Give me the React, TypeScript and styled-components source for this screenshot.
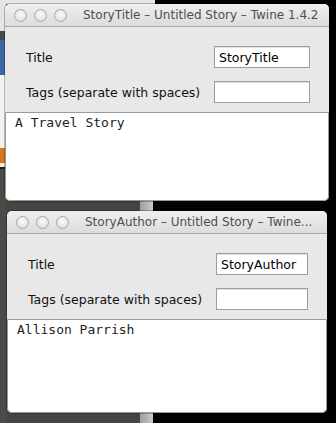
import React from 'react'
import styled, { createGlobalStyle } from 'styled-components'

const GlobalStyle = createGlobalStyle`
  html, body {
    margin: 0;
    padding: 0;
    background: #000;
  }
`

const uiFont = `"DejaVu Sans", "Liberation Sans", sans-serif`
const monoFont = `"DejaVu Sans Mono", "Liberation Mono", monospace`

const Desktop = styled.div`
  width: 336px;
  height: 423px;
  overflow: hidden;
  box-sizing: border-box;
  padding-top: 4px;
  display: flex;
  flex-direction: column;
  background:
    linear-gradient(to right, #e6e6e6 155px, #000 155px) top left / 100% 4px no-repeat,
    linear-gradient(
        to bottom,
        #e4e4e4 0 31px,
        #4a4a4a 31px 40px,
        #3b66a3 40px 75px,
        #f2f2f2 75px 148px,
        #d9771c 148px 163px,
        #efefef 163px 167px,
        #1e1e1e 167px 169px,
        #4a4b47 169px
      )
      top left / 6px 100% no-repeat,
    linear-gradient(to right, transparent 140px, #9d9d9d 140px, #c9c9c9 153px, transparent 153px),
    linear-gradient(to right, #454642 0 140px, #000 153px);
`

const Window = styled.section<{ $left: number; $width: number; $height: number; $gap?: number }>`
  margin-left: ${p => p.$left}px;
  margin-top: ${p => p.$gap ?? 0}px;
  width: ${p => p.$width}px;
  height: ${p => p.$height}px;
  flex-shrink: 0;
  display: flex;
  flex-direction: column;
  background: #e8e8e8;
  border-radius: 5px;
  box-shadow: 0 0 0 1px rgba(0, 0, 0, 0.25);
  overflow: hidden;
`

const TitleBar = styled.header`
  height: 22px;
  flex-shrink: 0;
  display: flex;
  align-items: center;
  padding-left: 9px;
  gap: 7px;
  background: linear-gradient(to bottom, #efefef, #dcdcdc);
  border-bottom: 1px solid #a9a9a9;
`

const Light = styled.span`
  width: 11px;
  height: 11px;
  border-radius: 50%;
  border: 1px solid #a7a7a7;
  background: radial-gradient(circle at 50% 40%, #fbfbfb 0, #e2e2e2 70%, #d2d2d2 100%);
  flex-shrink: 0;
`

const WindowTitle = styled.span`
  margin-left: 9px;
  font-family: ${uiFont};
  font-size: 12px;
  color: #4f4f4f;
  white-space: nowrap;
  overflow: hidden;
`

const Form = styled.div`
  height: 85px;
  flex-shrink: 0;
  box-sizing: border-box;
  padding: 19px 19px 0 21px;
  display: flex;
  flex-direction: column;
  gap: 13px;
`

const Row = styled.div`
  display: flex;
  align-items: center;
  justify-content: space-between;
`

const Label = styled.span`
  font-family: ${uiFont};
  font-size: 12.5px;
  color: #111;
`

const Field = styled.div<{ $width: number }>`
  width: ${p => p.$width}px;
  height: 22px;
  box-sizing: border-box;
  border: 1px solid #9d9d9d;
  background: #fff;
  box-shadow: inset 0 1px 0 #e2e2e2;
  font-family: ${uiFont};
  font-size: 12.5px;
  color: #000;
  padding: 3px 0 0 4px;
  white-space: nowrap;
`

const TextBox = styled.div<{ $pad: number }>`
  flex: 1;
  background: #fff;
  border: 1px solid #9a9a9a;
  border-radius: 0 0 5px 5px;
  padding: 2px 0 0 ${p => p.$pad}px;
  font-family: ${monoFont};
  font-size: 13px;
  line-height: 16px;
  color: #222;
`

interface PassageWindowProps {
  name: string
  title: string
  text: string
  left: number
  width: number
  height: number
  gap?: number
  inputWidth: number
  textPad: number
}

function PassageWindow({ name, title, text, left, width, height, gap, inputWidth, textPad }: PassageWindowProps) {
  return (
    <Window $left={left} $width={width} $height={height} $gap={gap}>
      <TitleBar>
        <Light />
        <Light />
        <Light />
        <WindowTitle>{title}</WindowTitle>
      </TitleBar>
      <Form>
        <Row>
          <Label>Title</Label>
          <Field $width={inputWidth}>{name}</Field>
        </Row>
        <Row>
          <Label>Tags (separate with spaces)</Label>
          <Field $width={inputWidth} />
        </Row>
      </Form>
      <TextBox $pad={textPad}>{text}</TextBox>
    </Window>
  )
}

export default function App() {
  return (
    <>
      <GlobalStyle />
      <Desktop>
        <PassageWindow
          name="StoryTitle"
          title="StoryTitle – Untitled Story – Twine 1.4.2"
          text="A Travel Story"
          left={5}
          width={324}
          height={197}
          inputWidth={96}
          textPad={9}
        />
        <PassageWindow
          name="StoryAuthor"
          title="StoryAuthor – Untitled Story – Twine..."
          text="Allison Parrish"
          left={7}
          width={320}
          height={202}
          gap={10}
          inputWidth={92}
          textPad={9}
        />
      </Desktop>
    </>
  )
}
